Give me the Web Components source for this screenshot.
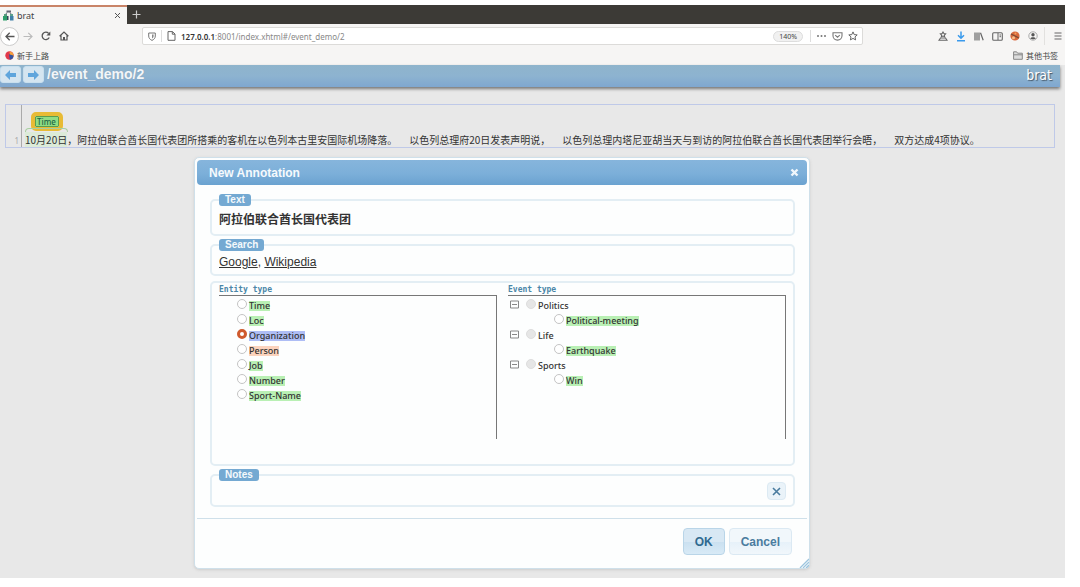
<!DOCTYPE html>
<html lang="zh">
<head>
<meta charset="utf-8">
<title>brat</title>
<style>
html,body{margin:0;height:100%;background:#fff}
body{font-family:"Noto Sans","Noto Sans CJK SC",sans-serif;color:#333}
</style>
</head>
<body>
<browser-window></browser-window>

<script>
const define = (name, html) => {
  const tpl = document.createElement('template');
  tpl.innerHTML = html;
  customElements.define(name, class extends HTMLElement {
    constructor() {
      super();
      this.attachShadow({ mode: 'open' }).append(tpl.content.cloneNode(true));
    }
  });
};

define('tab-strip', `
<style>
:host{display:flex;background:#3c3a36;height:19px;align-items:stretch}
.tab{box-sizing:border-box;width:127px;border-top:2px solid #c98468;background:#f6f5f4;display:flex;align-items:center;padding:0 6px 0 3px;gap:3px;font-size:9px;color:#444}
.tab span{flex:1}
button{border:0;background:none;padding:0;margin:0;display:flex}
.new{padding:0 5px;align-items:center}
</style>
<div class="tab">
<svg width="11" height="11" viewBox="0 0 11 11"><path d="M3.500.5h4.500v2H3.500z" fill="#667"/><path d="M4 2.500 2.500 4.500M7 2.500l1.500 2" stroke="#667"/><path d="M1 4h3v2H1z" fill="#5a9a80"/><path d="M0 6h4v4.500H0z" fill="#2f9e6b"/><path d="M4 6h1.500v4H4z" fill="#345"/><path d="M7 4h3v2H7z" fill="#5aa08c"/><path d="M7 6h3.500v4.500H7z" fill="#3f7fa8"/></svg>
<span>brat</span>
<button aria-label="Close tab"><svg width="7" height="7" viewBox="0 0 7 7"><path d="M1 1l5 5M6 1 1 6" stroke="#555"/></svg></button>
</div>
<button class="new" aria-label="New tab"><svg width="9" height="9" viewBox="0 0 9 9"><path d="M4.500.5v8M.5 4.500h8" stroke="#ccc" stroke-width="1.200"/></svg></button>
`);

define('address-bar', `
<style>
:host{display:flex;align-items:center;flex:1;min-width:0;box-sizing:border-box;height:18px;border:1px solid #dcdbd9;border-radius:2px;background:#fff;padding:0 4px 0 5px;gap:5px;font-size:8px;color:#888}
svg{display:block;flex:none}
i{width:1px;align-self:stretch;margin:2px 0;background:#ddd}
.url{flex:1;white-space:nowrap}
b{color:#333;font-weight:600}
.zoom{border:1px solid #ddd;border-radius:9px;background:#f1f1f1;font:7px "Noto Sans",sans-serif;color:#444;padding:0 5px;height:11px;line-height:9px;margin-right:2px}
</style>
<svg width="8" height="9" viewBox="0 0 8 9"><path d="M.7 1h6.600v3c0 2.300-1.500 3.600-3.300 4.400C2.200 7.600.7 6.300.7 4z" fill="none" stroke="#777"/><path d="M4 2.500v4c1-.6 1.600-1.400 1.600-2.600V2.500z" fill="#888"/></svg>
<i></i>
<svg width="9" height="10" viewBox="0 0 9 10"><path d="M1 .6h4.500L8 3v6.300H1zM5.300.6v2.600H8" fill="none" stroke="#666"/></svg>
<span class="url"><b>127.0.0.1</b>:8001/index.xhtml#/event_demo/2</span>
<button class="zoom">140%</button>
<i></i>
<svg width="11" height="4" viewBox="0 0 11 4"><g fill="#777"><circle cx="2" cy="2" r="1"/><circle cx="5.500" cy="2" r="1"/><circle cx="9" cy="2" r="1"/></g></svg>
<svg width="11" height="9" viewBox="0 0 11 9"><path d="M1 .8h9v3a4.500 4.300 0 0 1-9 0zM3.200 3.200l2.300 2 2.300-2" fill="none" stroke="#777" stroke-width="1.100"/></svg>
<svg width="10" height="10" viewBox="0 0 10 10"><path d="M5 .9l1.200 2.700 3 .3L7 5.900l.6 3L5 7.400 2.400 8.900 3 5.900.8 3.900l3-.3z" fill="none" stroke="#666"/></svg>
`);

define('nav-toolbar', `
<style>
:host{display:flex;align-items:center;height:24px;background:#f6f5f4}
svg{display:block}
button{border:0;background:none;padding:0;display:flex;align-items:center;justify-content:center;width:18px;height:18px}
.back{width:19px;height:19px;box-sizing:border-box;border:1px solid #ccc;border-radius:50%;background:#fff}
.nav{display:flex;width:142px;flex:none;align-items:center}
.tools{display:flex;width:202px;flex:none;justify-content:flex-end;align-items:center}
.menu{border-left:1px solid #e2e1df;margin-left:2px;padding-left:5px;width:21px}
</style>
<div class="nav">
<button class="back" aria-label="Back"><svg width="10" height="9" viewBox="0 0 10 9"><path d="M9.500 4.500H1M4.700.8 1 4.500l3.700 3.700" fill="none" stroke="#555" stroke-width="1.300"/></svg></button>
<button aria-label="Forward"><svg width="10" height="9" viewBox="0 0 10 9"><path d="M.5 4.500H9M5.300.8 9 4.500 5.300 8.200" fill="none" stroke="#bbb" stroke-width="1.200"/></svg></button>
<button aria-label="Reload"><svg width="10" height="10" viewBox="0 0 10 10"><path d="M8.200 6.500A3.700 3.700 0 1 1 7.600 2.400" fill="none" stroke="#555" stroke-width="1.300"/><path d="M9.300.6v4H5.400z" fill="#555"/></svg></button>
<button aria-label="Home"><svg width="10" height="10" viewBox="0 0 10 10"><path d="M.6 5.300 5 1l4.400 4.300M2 4.500V9h6V4.500" fill="none" stroke="#555" stroke-width="1.200"/><path d="M4 6h2v3H4z" fill="#555"/></svg></button>
</div>
<address-bar></address-bar>
<div class="tools">
<button aria-label="Account alert"><svg width="10" height="10" viewBox="0 0 10 10"><path d="M5 1l.9 1.500 1.700.3-1.200 1.200.2 1.700L5 5l-1.600.7.2-1.700-1.200-1.200 1.700-.3zM2.500 7 1 9.200h8L7.500 7z" fill="none" stroke="#666" stroke-width="1.100"/></svg></button>
<button aria-label="Downloads"><svg width="10" height="11" viewBox="0 0 10 11"><path d="M5 .5v6.500M2 4.300l3 3 3-3M1 9.800h8" fill="none" stroke="#3a9aec" stroke-width="1.500"/></svg></button>
<button aria-label="Library"><svg width="10" height="9" viewBox="0 0 10 9"><path d="M1 .5v8M3 .5v8M5 .5v8M6.500.8l2.700 7.500" stroke="#666" stroke-width="1.200"/></svg></button>
<button aria-label="Sidebar"><svg width="11" height="9" viewBox="0 0 11 9"><rect x=".7" y=".7" width="9.600" height="7.600" rx="1" fill="none" stroke="#666" stroke-width="1.100"/><path d="M6 1v7M7.500 3h1.500M7.500 4.700h1.500" stroke="#666"/></svg></button>
<button aria-label="Extension"><svg width="10" height="10" viewBox="0 0 10 10"><circle cx="5" cy="5" r="4.600" fill="#d8683c"/><path d="M1 3l8 4" stroke="#7a4a34" stroke-width="1.200"/><circle cx="3.500" cy="6.800" r="1.500" fill="#f6c08a"/><circle cx="5.500" cy="2.500" r="1" fill="#f2a25a"/></svg></button>
<button aria-label="Profile"><svg width="10" height="10" viewBox="0 0 10 10"><circle cx="5" cy="5" r="4.200" fill="none" stroke="#aaa"/><circle cx="5" cy="3.800" r="1.700" fill="#555"/><path d="M2.300 7.300C3 5.800 7 5.800 7.700 7.300 6.500 8.700 3.500 8.700 2.300 7.300z" fill="#555"/></svg></button>
<button class="menu" aria-label="Menu"><svg width="8" height="8" viewBox="0 0 8 8"><path d="M.5 1h7M.5 4h7M.5 7h7" stroke="#666" stroke-width="1.100"/></svg></button>
</div>
`);

define('bookmarks-bar', `
<style>
:host{display:flex;justify-content:space-between;align-items:center;height:17px;background:#f6f5f4;padding:0 7px 0 5px;font-size:8px}
a{display:flex;align-items:center;gap:3px;height:15px;margin-bottom:2px;color:#444;text-decoration:none}
</style>
<a href="#start"><svg width="9" height="9" viewBox="0 0 9 9"><circle cx="4.500" cy="4.500" r="4.200" fill="#e2384a"/><path d="M4.500.5a4 4 0 0 1 4 5L5 5z" fill="#f5a13b"/><path d="M4 3.200 8.400 4.500A4 4 0 0 1 4.800 8.700z" fill="#33529e"/></svg>新手上路</a>
<a href="#other"><svg width="10" height="9" viewBox="0 0 10 9"><path d="M.6 8.300V.8h3l1 1.400h4.700v6.100zM.6 3.800h8.700" fill="#ddd" stroke="#888"/></svg>其他书签</a>
`);

define('brat-header', `
<style>
:host{display:flex;align-items:flex-start;box-sizing:border-box;height:22px;padding-top:1px;margin-right:5px;background:linear-gradient(#8fb4cc,#8db3d0 50%,#7fa7d0);box-shadow:0 2px 3px #777;color:#f2f6fa;font-family:"Liberation Sans",sans-serif}
button{width:21px;height:17px;padding:0;margin-right:2px;border:1px solid #c8dfee;border-radius:3px;background:#d5e5f0;display:flex;align-items:center;justify-content:center}
h1{font-size:14px;line-height:16px;margin:0;flex:1;padding-left:1px;text-shadow:0 0 1px #89a}
.logo{font:14px/19px "DejaVu Sans Condensed","DejaVu Sans",sans-serif;padding-right:8px;color:#fff;text-shadow:1px 1px 1px #456}
</style>
<button aria-label="Previous document"><svg width="11" height="10" viewBox="0 0 11 10"><path d="M0 5l5-5v3h6v4H5v3z" fill="#5fa5dc"/></svg></button>
<button aria-label="Next document"><svg width="11" height="10" viewBox="0 0 11 10"><path d="M11 5 6 0v3H0v4h6v3z" fill="#5fa5dc"/></svg></button>
<h1>/event_demo/2</h1>
<span class="logo">brat</span>
`);

define('annotated-document', `
<style>
:host{display:grid;grid-template-columns:16px 1fr;margin:17px 10px 0 5px;border:1px solid #bfc9e8;box-sizing:border-box;height:44px}
.num{border-right:1px solid #aaa;font-size:8px;line-height:12px;color:#aaa;text-align:right;padding:30px 2px 0 0}
.line{padding:7px 0 0 3px;min-width:0}
.time{display:flex;flex-direction:column;align-items:center;width:43px}
mark{background:#8fdc84;border:1px solid #5a9c4e;outline:4px solid #e8bb35;border-radius:1px;color:#264;font-size:8px;line-height:9px;font-weight:500;margin-top:4px;box-sizing:border-box;height:11px;width:24px;text-align:center}
.arc{display:block;box-sizing:border-box;width:43px;height:4px;border:1px solid #a8cfa0;border-bottom:0;border-radius:4px 4px 0 0;margin-top:1px}
p{margin:0;display:flex;gap:12px;font:10px/15px "Noto Sans CJK SC",sans-serif;color:#333;white-space:nowrap}
.d{background:#dcebd8}
</style>
<div class="num">1</div>
<div class="line">
<div class="time"><mark>Time</mark><span class="arc"></span></div>
<p><span><span class="d">10月20日</span>，阿拉伯联合酋长国代表团所搭乘的客机在以色列本古里安国际机场降落。</span><span>以色列总理府20日发表声明说，</span><span>以色列总理内塔尼亚胡当天与到访的阿拉伯联合酋长国代表团举行会晤，</span><span>双方达成4项协议。</span></p>
</div>
`);

define('form-group', `
<style>
:host{display:block}
fieldset{box-sizing:border-box;min-width:0;margin:0;border:2px solid #e3eef4;border-radius:5px;padding:var(--pad,0 7px);height:100%;background:#fdfefe}
legend{margin:0;padding:0 6px;border-radius:3px;background:#74a9d2;color:#f4f9fc;font:bold 10px/12px "Liberation Sans",sans-serif}
</style>
<fieldset><legend><slot name="label"></slot></legend><slot></slot></fieldset>
`);

class TypeRow extends HTMLElement {
  connectedCallback() {
    if (this.shadowRoot) return;
    const group = this.hasAttribute('group');
    this.attachShadow({ mode: 'open' }).innerHTML = `
<style>
:host{display:flex;align-items:flex-start;height:15px;padding-left:var(--indent,18px);font:500 9px/10px "Noto Sans",sans-serif;color:#333}
.box{width:9px;height:9px;flex:none;margin:4px 7px 0 0;padding:0;border:0;background:none;display:flex}
label{display:flex;align-items:flex-start;gap:2px}
input{appearance:none;box-sizing:border-box;margin:3px 0 0;width:10px;height:10px;border:1px solid #c4c4c4;border-radius:50%;background:#fff}
input:checked{border:3px solid #cf5a2e}
input:disabled{background:#e6e6e6;border-color:#ddd}
span{margin-top:5px;background:var(--mark,none)}
</style>
${group ? '<button type="button" class="box" aria-label="Collapse"><svg width="9" height="9" viewBox="0 0 9 9"><path d="M.5 1h8v7h-8zM2 4.500h5" fill="none" stroke="#888"/></svg></button>' : ''}
<label><input type="radio" name="type" ${group ? 'disabled' : ''} ${this.hasAttribute('checked') ? 'checked' : ''}><span><slot></slot></span></label>`;
  }
}
customElements.define('type-row', TypeRow);

define('type-panel', `
<style>
:host{display:block;min-width:0}
h2{margin:0;font:bold 8px/11px "DejaVu Sans Mono",monospace;color:#4a86a8}
.list{box-sizing:border-box;height:144px;border:1px solid #777;border-left:0;border-bottom:0}
</style>
<h2><slot name="title"></slot></h2>
<div class="list"><slot></slot></div>
`);

define('annotation-dialog', `
<style>
:host{display:block;box-sizing:border-box;background:#fdfefe;border:1px solid #cfe0ea;border-radius:5px;padding:2px;box-shadow:0 1px 3px #ccc;font:12px/16px "Liberation Sans","Noto Sans CJK SC",sans-serif;color:#333}
header{display:flex;align-items:center;justify-content:space-between;height:25px;padding:0 8px 0 12px;border-radius:4px;background:linear-gradient(#86b5dc,#7cafd9 55%,#6aa2d0);color:#f6fafd;font-weight:bold}
header button{border:0;background:none;padding:0;display:flex}
form{display:block;margin:0}
.body{padding:9px 12px 11px 13px;display:flex;flex-direction:column}
.text{height:42px;--pad:6px 7px 0}
.search{height:37px;margin-top:3px;--pad:3px 7px 0}
.types{box-sizing:border-box;height:185px;margin:5px 0 3px;border:2px solid #e3eef4;border-radius:5px;padding:1px 7px;display:grid;grid-template-columns:1fr 1fr;gap:11px}
.notes{height:38px}
a{color:#333}
.row{display:flex;justify-content:space-between;align-items:center;height:20px}
.row input{flex:1;border:0;background:none;outline:0;padding:0;height:18px;font:inherit}
.clear{width:19px;height:18px;padding:0;border:1px solid #dceaf3;border-radius:4px;background:#eaf3f9;display:flex;align-items:center;justify-content:center}
footer{border-top:1px solid #cfe0ea;display:flex;justify-content:flex-end;gap:4px;padding:9px 15px 11px}
footer button{height:27px;padding:0 11px;border:1px solid #dbe9f3;border-radius:4px;background:linear-gradient(#f1f7fb 50%,#e6f1f9 51%,#f1f7fb);color:#4a7c9f;font:bold 12px/16px "Liberation Sans",sans-serif}
footer .ok{border-color:#b9d5e8;background:linear-gradient(#d8e8f4 50%,#cae0f0 51%,#d8eaf6);color:#2f6a90}
.grip{position:absolute;right:0;bottom:0;display:block}
.g{--mark:#b9f0b4}.o{--mark:#aebdf5}.p{--mark:#fbd3bd}
.group{--indent:2px}.sub{--indent:46px}
</style>
<header><span>New Annotation</span><button aria-label="Close"><svg width="9" height="9" viewBox="0 0 9 9"><path d="M1.500 1.500l6 6M7.500 1.500l-6 6" stroke="#f0f7fc" stroke-width="2.400"/></svg></button></header>
<form>
<div class="body">
<form-group class="text"><span slot="label">Text</span><b>阿拉伯联合酋长国代表团</b></form-group>
<form-group class="search"><span slot="label">Search</span><a href="#google">Google</a>, <a href="#wikipedia">Wikipedia</a></form-group>
<div class="types">
<type-panel><span slot="title">Entity type</span>
<type-row class="g">Time</type-row><type-row class="g">Loc</type-row><type-row class="o" checked>Organization</type-row><type-row class="p">Person</type-row><type-row class="g">Job</type-row><type-row class="g">Number</type-row><type-row class="g">Sport-Name</type-row></type-panel>
<type-panel><span slot="title">Event type</span>
<type-row group class="group">Politics</type-row><type-row class="g sub">Political-meeting</type-row><type-row group class="group">Life</type-row><type-row class="g sub">Earthquake</type-row><type-row group class="group">Sports</type-row><type-row class="g sub">Win</type-row></type-panel>
</div>
<form-group class="notes"><span slot="label">Notes</span><div class="row"><input type="text" aria-label="Notes"><button type="button" class="clear" aria-label="Clear notes"><svg width="9" height="9" viewBox="0 0 9 9"><path d="M1 1l7 7M8 1 1 8" stroke="#4a7c9f" stroke-width="1.600"/></svg></button></div></form-group>
</div>
<footer><button type="button" class="ok">OK</button><button type="button">Cancel</button></footer>
</form>
<svg class="grip" width="10" height="10" viewBox="0 0 10 10"><path d="M1 10l9-9M4 10l6-6M7 10l3-3" stroke="#9cc5de" stroke-width="1.300"/></svg>
`);

define('browser-window', `
<style>
:host{display:flex;flex-direction:column;box-sizing:border-box;min-height:100%;padding:5px 15px 9px 0}
main{flex:1;background:#e8e8e8;position:relative;min-height:513px}
annotation-dialog{position:absolute;top:92px;left:194px;width:calc(100% - 449px)}
</style>
<tab-strip></tab-strip>
<nav-toolbar></nav-toolbar>
<bookmarks-bar></bookmarks-bar>
<main>
<brat-header></brat-header>
<annotated-document></annotated-document>
<annotation-dialog></annotation-dialog>
</main>
`);
</script>
</body>
</html>
